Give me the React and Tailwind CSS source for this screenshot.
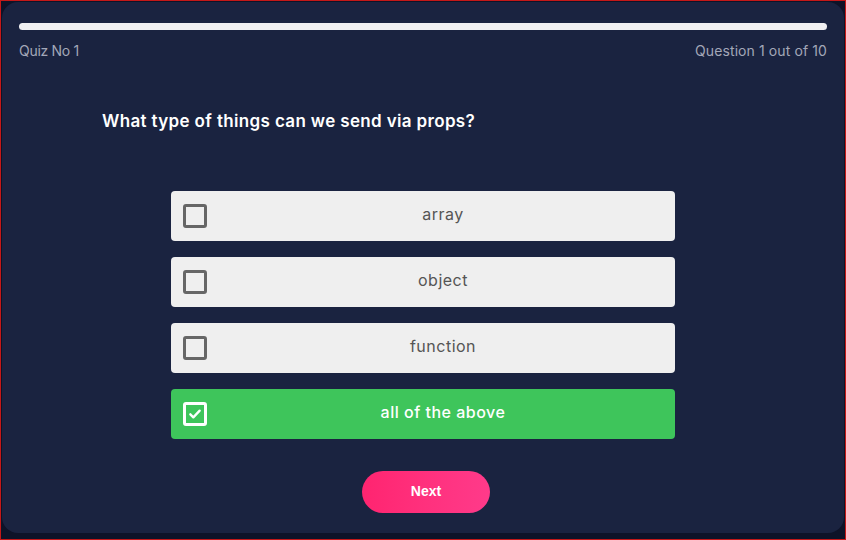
import React, { useState } from 'react';

const options = ['array', 'object', 'function', 'all of the above'];

const CheckBox = ({ checked }) => (
  <div
    className={`flex h-6 w-6 shrink-0 items-center justify-center rounded-[3px] border-[3px] ${
      checked ? 'border-white' : 'border-[#666666]'
    }`}
  >
    {checked && (
      <svg viewBox="0 0 24 24" className="h-4 w-4" fill="none" stroke="white" strokeWidth="3.5" strokeLinecap="round" strokeLinejoin="round">
        <path d="M5 12.5l4.5 4.5L19 7" />
      </svg>
    )}
  </div>
);

const App = () => {
  const [selected, setSelected] = useState(3);

  return (
    <div className="h-[540px] w-[846px] border border-[#c41818] bg-[#0e1328] p-px" style={{ fontFamily: 'Inter, "Noto Sans", sans-serif' }}>
      <div className="flex h-[531px] flex-col rounded-2xl bg-[#1a2340] px-[17px] pt-[21px]">
        {/* Progress */}
        <div className="h-[7px] w-full rounded-full bg-[#f0f0f2]"></div>
        <div className="mt-[10px] flex justify-between text-[14px] text-[#a3a7b8]">
          <span className="tracking-[-0.3px]">Quiz No 1</span>
          <span className="tracking-[0.1px]">Question 1 out of 10</span>
        </div>

        <h2 className="mt-[48px] pl-[83px] text-[17px] font-semibold tracking-[0.35px] text-white">
          What type of things can we send via props?
        </h2>

        <div className="mt-[56px] flex flex-col items-center gap-4">
          {options.map((opt, i) => {
            const active = selected === i;
            return (
              <button
                key={opt}
                onClick={() => setSelected(i)}
                className={`flex h-[50px] w-[504px] items-center rounded-[4px] px-3 ${
                  active ? 'bg-[#3ec55b] text-white' : 'bg-[#efefef] text-[#555555]'
                }`}
              >
                <CheckBox checked={active} />
                <span className={`flex-1 pb-[4px] pl-4 text-center text-[16px] tracking-[0.5px] ${active ? 'font-medium' : ''}`}>{opt}</span>
              </button>
            );
          })}
        </div>

        <div className="mt-8 flex justify-center pl-[6px]">
          <button
            className="h-[42px] w-[128px] rounded-full bg-gradient-to-r from-[#ff2470] to-[#ff3a8a] text-[14px] font-bold text-white"
            style={{ fontFamily: '"Liberation Sans", Arial, sans-serif' }}
          >
            Next
          </button>
        </div>
      </div>
    </div>
  );
};

export default App;
